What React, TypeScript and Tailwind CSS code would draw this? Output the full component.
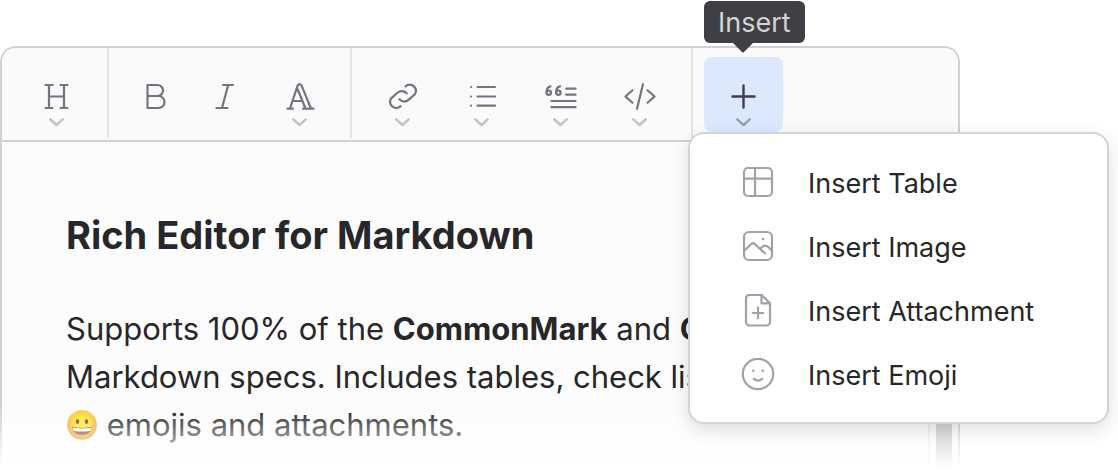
import type { ReactNode } from "react";

type ToolProps = {
  label: string;
  children: ReactNode;
  active?: boolean;
};

function Chevron({ active = false }: { active?: boolean }) {
  return (
    <svg
      viewBox="0 0 79 10"
      className={`h-[10px] w-[79px] ${active ? "text-[#98a1b3]" : "text-[#c3c3c7]"}`}
      fill="none"
      stroke="currentColor"
      strokeWidth="2.5"
      strokeLinecap="round"
      strokeLinejoin="round"
      aria-hidden="true"
    >
      <path d="M33.3 2.4 39.5 8 45.7 2.4" />
    </svg>
  );
}

function MenuTool({ label, children, active = false }: ToolProps) {
  return (
    <button
      type="button"
      aria-label={label}
      aria-haspopup="menu"
      aria-expanded={active}
      className={`flex h-[75px] w-[79px] flex-col items-center rounded-lg pt-5 ${
        active ? "bg-[#dbe8fe] text-[#3f3f46]" : "text-[#75747e]"
      }`}
    >
      <svg
        viewBox="0 0 79 40"
        className="h-10 w-[79px]"
        fill="none"
        stroke="currentColor"
        strokeWidth="2.2"
        strokeLinecap="round"
        strokeLinejoin="round"
        aria-hidden="true"
      >
        {children}
      </svg>
      <Chevron active={active} />
    </button>
  );
}

function PlainTool({ label, children }: ToolProps) {
  return (
    <button
      type="button"
      aria-label={label}
      className="flex h-[75px] w-[70px] flex-col items-center rounded-lg pt-5 text-[#75747e]"
    >
      <svg
        viewBox="0 0 70 40"
        className="h-10 w-[70px]"
        fill="none"
        stroke="currentColor"
        strokeWidth="2.2"
        strokeLinecap="round"
        strokeLinejoin="round"
        aria-hidden="true"
      >
        {children}
      </svg>
    </button>
  );
}

function MenuItem({ label, children }: ToolProps) {
  return (
    <button
      type="button"
      role="menuitem"
      className="flex h-16 w-full items-center gap-8 pl-[50px] text-left text-[27px] leading-8 text-[#27272a]"
    >
      <svg
        viewBox="0 1 36 36"
        className="size-9 shrink-0 text-[#a1a1aa]"
        fill="none"
        stroke="currentColor"
        strokeWidth="2.2"
        strokeLinecap="round"
        strokeLinejoin="round"
        aria-hidden="true"
      >
        {children}
      </svg>
      <span>{label}</span>
    </button>
  );
}

function Grin() {
  return (
    <svg viewBox="0 0 32 32" role="img" aria-label="grinning face" className="inline-block size-8 align-[-6px]">
      <defs>
        <radialGradient id="grin-face" cx="0.5" cy="0.38" r="0.62">
          <stop offset="0" stopColor="#ffee3c" />
          <stop offset="0.55" stopColor="#fdd02a" />
          <stop offset="1" stopColor="#ee8420" />
        </radialGradient>
      </defs>
      <circle cx="16" cy="15" r="14.8" fill="url(#grin-face)" />
      <ellipse cx="11.5" cy="11.7" rx="1.6" ry="2.4" fill="#6b3f0c" />
      <ellipse cx="20.5" cy="11.7" rx="1.6" ry="2.4" fill="#6b3f0c" />
      <path d="M5.8 16.8Q16 19.1 26.2 16.8Q25 25 16 25Q7 25 5.8 16.8Z" fill="#7a4c18" />
      <path d="M6.6 17.5Q16 19.5 25.4 17.5Q25.2 20.7 23.5 20.9Q16 21.9 8.5 20.9Q6.8 20.7 6.6 17.5Z" fill="#fff" />
    </svg>
  );
}

function InsertTool() {
  return (
    <div className="relative">
      <MenuTool label="Insert" active>
        <path d="M28.5 19.5H50.5M39.5 8.5V30.5" strokeWidth="2.4" />
      </MenuTool>
      <div
        role="tooltip"
        className="absolute -top-14 left-0 rounded-md bg-[#3f3f46] px-[14px] pt-[6px] pb-1 text-[27px] leading-8 text-[#d4d4d8]"
      >
        Insert
        <svg viewBox="0 0 20 10" className="absolute top-full left-[29px] h-[10px] w-5 text-[#3f3f46]" aria-hidden="true">
          <path d="M0 0H20L11 9Q10 10 9 9Z" fill="currentColor" />
        </svg>
      </div>
      <div
        role="menu"
        aria-label="Insert"
        className="absolute top-[75px] -left-4 w-[421px] rounded-2xl border-2 border-[#d4d4d8] bg-white pt-[18px] pb-[14px] shadow-[0_6px_18px_rgba(0,0,0,0.13)]"
      >
        <MenuItem label="Insert Table">
          <rect x="4" y="3" width="28" height="28" rx="4" />
          <path d="M15 3V31M4 13.7H32" />
        </MenuItem>
        <MenuItem label="Insert Image">
          <rect x="4" y="3" width="28" height="28" rx="5" />
          <path d="M4.5 21.5 11 15.2Q13 13.3 15 15.2L25 24.3" />
          <path d="M20.5 19.5 22.6 17.6Q25.5 15.4 28 17.8L31.5 21.3" />
          <circle cx="23" cy="10" r="1.3" fill="currentColor" stroke="none" />
        </MenuItem>
        <MenuItem label="Insert Attachment">
          <path d="M21.5 1.8H9.5A3.5 3.5 0 0 0 6 5.3V29A3.5 3.5 0 0 0 9.5 32.5H26.5A3.5 3.5 0 0 0 30 29V10.3Z" />
          <path d="M21.5 1.8V10.3H30M18 14.7V25.3M12.7 20H23.3" />
        </MenuItem>
        <MenuItem label="Insert Emoji">
          <circle cx="18" cy="17" r="15.2" />
          <path d="M13.8 21.8Q18 25.4 22.2 21.8" />
          <circle cx="13.3" cy="13.7" r="1.3" fill="currentColor" stroke="none" />
          <circle cx="22.7" cy="13.7" r="1.3" fill="currentColor" stroke="none" />
        </MenuItem>
      </div>
    </div>
  );
}

function Toolbar() {
  return (
    <div
      role="toolbar"
      aria-label="Formatting"
      className="relative z-10 flex rounded-t-[14px] border-b-2 border-[#d1d1d5] bg-[#fafafa] pb-[2px]"
    >
      <div className="flex h-[90px] border-r-2 border-[#e4e4e7] pt-[9px] pr-[11px] pl-[15px]">
        <MenuTool label="Heading">
          <path d="M28.5 8H35.5M43.5 8H50.5M28.5 31H35.5M43.5 31H50.5M32 8V31M47 8V31M32 19.5H47" />
        </MenuTool>
      </div>
      <div className="flex h-[90px] border-r-2 border-[#e4e4e7] px-[11px] pt-[9px]">
        <PlainTool label="Bold">
          <path d="M27.5 8V31H38.5A6 6 0 0 0 38.5 19H27.5M27.5 8H37.5A5.5 5.5 0 0 1 37.5 19" />
        </PlainTool>
        <PlainTool label="Italic">
          <path d="M33 8H43M26.5 31H37.5M38.2 8 32 31" />
        </PlainTool>
        <MenuTool label="Text style">
          <path d="M27.5 31.7H33M43 31.7H53.5M30 31.5 37.6 8.6Q39.5 5.6 41.6 8.6L51 31.5M37.3 11.5 45.5 31.5M32.8 24H42.3" />
        </MenuTool>
      </div>
      <div className="flex h-[90px] border-r-2 border-[#e4e4e7] pt-[9px] pr-3 pl-[11px]">
        <MenuTool label="Link">
          <path d="M42.5 9.5 43.6 8.5A6.2 6.2 0 0 1 51.9 17.2L45.5 22.9A6.5 6.5 0 0 1 36.3 22.3" />
          <path d="M37.5 29.1 36.4 30.1A6.2 6.2 0 0 1 28.1 21.4L34.5 15.7A6.5 6.5 0 0 1 43.7 16.3" />
        </MenuTool>
        <MenuTool label="List">
          <path d="M35.5 10H53M35.5 19.5H53M35.5 28.7H53" />
          <path d="M29 10H29.01M29 19.5H29.01M29 28.7H29.01" />
        </MenuTool>
        <MenuTool label="Quote">
          <path d="M45.2 11.7H54.5M45.2 17.7H54.5M30.5 24H54.5M30.5 30.2H54.5" />
          <path d="M29.5 9.4Q25.5 10.3 25.6 15.5" />
          <circle cx="27.8" cy="15.7" r="2.2" />
          <path d="M39.1 9.4Q35.1 10.3 35.2 15.5" />
          <circle cx="37.4" cy="15.7" r="2.2" />
        </MenuTool>
        <MenuTool label="Code">
          <path d="M32.5 13.3 25.5 19.5 32.5 25.7M47.5 13.3 54.5 19.5 47.5 25.7M43 7.2 37 31.8" />
        </MenuTool>
      </div>
      <div className="flex h-[90px] pt-[9px] pl-[11px]">
        <InsertTool />
      </div>
    </div>
  );
}

export default function App() {
  return (
    <main className="overflow-hidden bg-white pt-[46px] font-['Inter',sans-serif] text-[#27272a]">
      <section className="relative mr-[158px] rounded-t-2xl border-x-2 border-t-2 border-[#d1d1d5] bg-[#fcfcfc]">
        <Toolbar />
        <div className="flex">
          <article className="min-w-0 flex-1 overflow-hidden pt-[69px] pb-[23px] pl-16 whitespace-nowrap">
            <h1 className="mb-[46px] text-[38px] leading-[48px] font-bold">Rich Editor for Markdown</h1>
            <p className="text-[31px] leading-[48px]">
              Supports 100% of the <strong className="font-bold">CommonMark</strong> and{" "}
              <strong className="font-bold">GFM</strong>
              <br />
              Markdown specs. Includes tables, check lists,
              <br />
              <Grin /> emojis and attachments.
            </p>
          </article>
          <div className="flex w-[30px] justify-center border-l-2 border-[#e8e8e8] bg-[#fafafa] px-[6px]">
            <div className="w-4 bg-[#c1c1c1]" />
          </div>
        </div>
        <div className="absolute -inset-x-[2px] bottom-0 h-16 bg-linear-to-b from-white/0 to-white to-95%" />
      </section>
    </main>
  );
}
